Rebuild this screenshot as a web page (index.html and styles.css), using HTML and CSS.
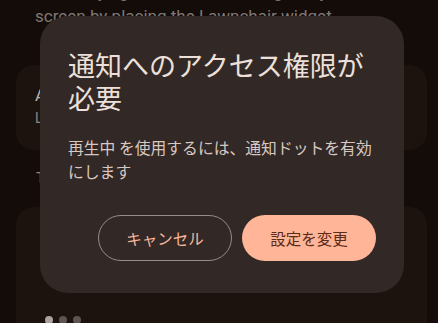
FILE: index.html
```html
<!DOCTYPE html>
<html lang="ja">
<head>
<meta charset="utf-8">
<link rel="stylesheet" href="styles.css">
</head>
<body>
<div class="screen">
  <div class="intro">
    <p class="intro-line">Now Playing can also show songs on your</p>
    <p class="intro-line">screen by placing the Lawnchair widget</p>
  </div>
  <div class="card card-top">
    <div class="card-title">At a Glance</div>
    <div class="card-sub">Lawnchair widget</div>
  </div>
  <div class="section-head">Tips</div>
  <div class="card card-bottom">
    <div class="dots">
      <span class="dot dot-on"></span>
      <span class="dot"></span>
      <span class="dot"></span>
    </div>
  </div>
</div>

<div class="dialog" role="dialog">
  <h1 class="dialog-title">通知へのアクセス権限が必要</h1>
  <p class="dialog-body">再生中 を使用するには、通知ドットを有効にします</p>
  <div class="dialog-actions">
    <button class="btn btn-outline">キャンセル</button>
    <button class="btn btn-filled">設定を変更</button>
  </div>
</div>
</body>
</html>
```

FILE: styles.css
```css
html, body {
  margin: 0;
  padding: 0;
}
body {
  width: 438px;
  height: 323px;
  overflow: hidden;
  background: #140c09;
  font-family: "Noto Sans CJK JP", "Noto Sans", sans-serif;
  position: relative;
}
.screen {
  height: 323px;
  overflow: hidden;
  padding: 0 11px 0 16px;
  display: flex;
  flex-direction: column;
}
.intro {
  margin-top: -20px;
  padding-left: 19px;
}
.intro-line {
  margin: 0;
  font-family: Roboto, "Noto Sans", sans-serif;
  font-size: 17px;
  line-height: 24px;
  color: #7f7874;
  white-space: nowrap;
}
.card {
  background: #1c130e;
  border-radius: 18px;
  flex-shrink: 0;
}
.card-top {
  margin-top: 37px;
  height: 85px;
  padding: 18px 19px 0;
  box-sizing: border-box;
}
.card-title {
  font-family: Roboto, sans-serif;
  font-size: 17px;
  line-height: 24px;
  color: #b9b1ad;
}
.card-sub {
  font-family: Roboto, sans-serif;
  font-size: 14px;
  line-height: 22px;
  color: #8d8581;
}
.section-head {
  margin-top: 17px;
  padding-left: 20px;
  font-family: Roboto, sans-serif;
  font-size: 15px;
  line-height: 22px;
  color: #b57a5e;
}
.card-bottom {
  margin-top: 18px;
  height: 130px;
  padding: 109px 0 0 29px;
  box-sizing: border-box;
}
.dots {
  display: flex;
  gap: 6px;
}
.dot {
  width: 8px;
  height: 8px;
  border-radius: 50%;
  background: #5b5450;
}
.dot-on {
  background: #aaa3a0;
}

.dialog {
  position: absolute;
  left: 40px;
  top: 16px;
  width: 364px;
  height: 277px;
  box-sizing: border-box;
  background: #322825;
  border-radius: 28px;
  padding: 32px 26px 32px 28px;
  display: flex;
  flex-direction: column;
}
.dialog-title {
  margin: 0;
  font-weight: 400;
  font-size: 27px;
  line-height: 33px;
  color: #ede0db;
}
.dialog-body {
  margin: 22px 0 0;
  font-size: 15.8px;
  line-height: 24px;
  color: #d8c8c2;
}
.dialog-actions {
  margin-top: auto;
  margin-right: 2px;
  display: flex;
  justify-content: flex-end;
  gap: 10px;
}
.btn {
  height: 46px;
  width: 134px;
  border-radius: 23px;
  font-family: "Noto Sans CJK JP", sans-serif;
  font-size: 15.5px;
  padding: 0;
  box-sizing: border-box;
}
.btn-outline {
  background: transparent;
  border: 1px solid #9a8c86;
  color: #f7b79c;
}
.btn-filled {
  background: #ffb597;
  border: none;
  color: #5c2b1a;
}
```
